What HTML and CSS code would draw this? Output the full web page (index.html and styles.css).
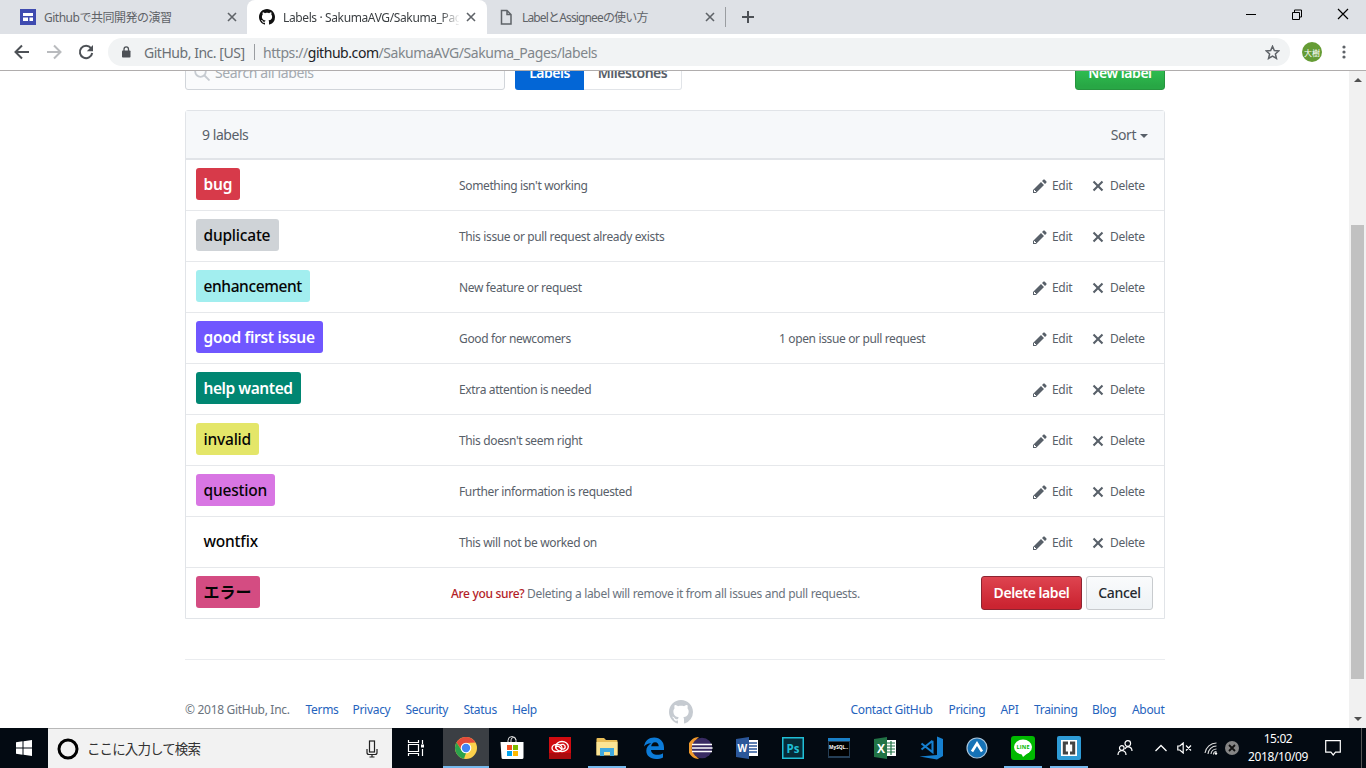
FILE: index.html
```html
<!DOCTYPE html>
<html lang="ja">
<head>
<meta charset="utf-8">
<title>Labels · SakumaAVG/Sakuma_Pages</title>
<link rel="stylesheet" href="styles.css">
</head>
<body>
<svg class="defs" aria-hidden="true">
  <symbol id="mark" viewBox="0 0 16 16"><path d="M8 0C3.58 0 0 3.58 0 8c0 3.54 2.29 6.53 5.47 7.59.4.07.55-.17.55-.38 0-.19-.01-.82-.01-1.49-2.01.37-2.53-.49-2.69-.94-.09-.23-.48-.94-.82-1.13-.28-.15-.68-.52-.01-.53.63-.01 1.08.58 1.23.82.72 1.21 1.87.87 2.33.66.07-.52.28-.87.51-1.07-1.78-.2-3.64-.89-3.64-3.95 0-.87.31-1.59.82-2.15-.08-.2-.36-1.02.08-2.12 0 0 .67-.21 2.2.82.64-.18 1.32-.27 2-.27.68 0 1.36.09 2 .27 1.53-1.04 2.2-.82 2.2-.82.44 1.1.16 1.92.08 2.12.51.56.82 1.27.82 2.15 0 3.07-1.87 3.75-3.65 3.95.29.25.54.73.54 1.48 0 1.07-.01 1.93-.01 2.2 0 .21.15.46.55.38A8.013 8.013 0 0 0 16 8c0-4.42-3.58-8-8-8z"/></symbol>
  <symbol id="pencil" viewBox="0 0 14 16"><path d="M0 12v3h3l8-8-3-3-8 8zm3 2H1v-2h1v1h1v1zm10.3-9.3L12 6 9 3l1.3-1.3a.996.996 0 0 1 1.41 0l1.59 1.59c.39.39.39 1.02 0 1.41z"/></symbol>
  <symbol id="x" viewBox="0 0 12 16"><path d="M7.48 8l3.75 3.75-1.48 1.48L6 9.48l-3.75 3.75-1.48-1.48L4.52 8 .77 4.25l1.48-1.48L6 6.52l3.75-3.75 1.48 1.48L7.48 8z"/></symbol>
  <symbol id="close" viewBox="0 0 10 10"><path d="M1 1l8 8M9 1l-8 8" fill="none" stroke="#5f6368" stroke-width="1.6"/></symbol>
</svg>

<header class="tabs">
  <div class="tab tab-first">
    <svg class="favicon" viewBox="0 0 16 16"><rect width="16" height="16" fill="#3f4bb0"/><path d="M3 4h10v3H3zM3 8.500h5V12H3zM9.500 8.500H13V12H9.500z" fill="#fff"/></svg>
    <span class="tab-title t1">Githubで共同開発の演習</span>
    <svg class="close"><use href="#close"/></svg>
  </div>
  <div class="tab tab-active">
    <svg class="favicon" fill="#111"><use href="#mark"/></svg>
    <span class="tab-title t2">Labels · SakumaAVG/Sakuma_Pages</span>
    <svg class="close"><use href="#close"/></svg>
  </div>
  <div class="tab tab-third">
    <svg class="favicon" viewBox="0 0 16 16" fill="none" stroke="#5f6368" stroke-width="1.500"><path d="M3.500 1.500h5.500l4 4v9.500h-9.500zM9 1.500v4h4"/></svg>
    <span class="tab-title t3">LabelとAssigneeの使い方</span>
    <svg class="close"><use href="#close"/></svg>
  </div>
  <svg class="plus" viewBox="0 0 12 12"><path d="M6 0v12M0 6h12" stroke="#4d5156" stroke-width="2"/></svg>
  <div class="winbtns">
    <svg viewBox="0 0 12 12"><path d="M1 6.500h10" stroke="#000"/></svg>
    <svg viewBox="0 0 12 12" fill="none" stroke="#000"><path d="M1.500 4.500h7v7h-7zM3.500 4.500v-2.500h7v7h-2"/></svg>
    <svg viewBox="0 0 12 12" fill="none" stroke="#000" stroke-width="1.200"><path d="M1 1l10 10M11 1L1 11"/></svg>
  </div>
</header>

<div class="toolbar">
  <svg class="nav-icon" viewBox="0 0 16 16" fill="none" stroke="#4d5156" stroke-width="2"><path d="M15 8H2M8 1.500L1.500 8 8 14.500"/></svg>
  <svg class="nav-icon" viewBox="0 0 16 16" fill="none" stroke="#b9bbbe" stroke-width="2"><path d="M1 8h13M8 1.500L14.500 8 8 14.500"/></svg>
  <svg class="nav-icon" viewBox="0 0 16 16"><path d="M13 4.200A6.200 6.200 0 1 0 14.200 9" fill="none" stroke="#4d5156" stroke-width="2"/><path d="M15 1v6.200H8.800z" fill="#4d5156"/></svg>
  <div class="omnibox">
    <svg class="lock" viewBox="0 0 10 12"><rect x="1" y="4.500" width="8.500" height="7" rx=".8" fill="#4d5156"/><path d="M3 5V3.200a2.250 2.250 0 0 1 4.500 0V5" fill="none" stroke="#4d5156" stroke-width="1.300"/></svg>
    <span class="org">GitHub, Inc. [US]</span>
    <span class="bar"></span>
    <span class="url">https://<b>github.com</b>/SakumaAVG/Sakuma_Pages/labels</span>
    <svg class="star" viewBox="0 0 14 14"><path d="M7 1.200l1.700 3.900 4.200.4-3.200 2.800 1 4.200L7 10.300l-3.700 2.200 1-4.200L1.100 5.500l4.200-.4z" fill="none" stroke="#5f6368" stroke-width="1.400"/></svg>
  </div>
  <span class="avatar">大樹</span>
  <svg class="dots" viewBox="0 0 4 14" fill="#5f6368"><circle cx="2" cy="2" r="1.600"/><circle cx="2" cy="7" r="1.600"/><circle cx="2" cy="12" r="1.600"/></svg>
</div>

<div class="viewport">
  <main class="page">
    <div class="subnav">
      <div class="search"><svg viewBox="0 0 16 16" fill="none" stroke="#c6cbd1" stroke-width="1.800"><circle cx="6.500" cy="6.500" r="5.300"/><path d="M10.500 10.500l5 5"/></svg><span>Search all labels</span></div>
      <div class="switch"><span class="on">Labels</span><span class="off">Milestones</span></div>
      <span class="new">New label</span>
    </div>
    <section class="list">
      <div class="list-head"><span class="count">9 labels</span><span class="sort">Sort<i></i></span></div>
      <div class="row"><span class="chip bug">bug</span><span class="desc">Something isn't working</span><span></span><a class="act"><svg class="pencil"><use href="#pencil"/></svg>Edit</a><a class="act"><svg class="x"><use href="#x"/></svg>Delete</a></div>
      <div class="row"><span class="chip duplicate">duplicate</span><span class="desc">This issue or pull request already exists</span><span></span><a class="act"><svg class="pencil"><use href="#pencil"/></svg>Edit</a><a class="act"><svg class="x"><use href="#x"/></svg>Delete</a></div>
      <div class="row"><span class="chip enhancement">enhancement</span><span class="desc">New feature or request</span><span></span><a class="act"><svg class="pencil"><use href="#pencil"/></svg>Edit</a><a class="act"><svg class="x"><use href="#x"/></svg>Delete</a></div>
      <div class="row"><span class="chip first">good first issue</span><span class="desc">Good for newcomers</span><span class="desc">1 open issue or pull request</span><a class="act"><svg class="pencil"><use href="#pencil"/></svg>Edit</a><a class="act"><svg class="x"><use href="#x"/></svg>Delete</a></div>
      <div class="row"><span class="chip help">help wanted</span><span class="desc">Extra attention is needed</span><span></span><a class="act"><svg class="pencil"><use href="#pencil"/></svg>Edit</a><a class="act"><svg class="x"><use href="#x"/></svg>Delete</a></div>
      <div class="row"><span class="chip invalid">invalid</span><span class="desc">This doesn't seem right</span><span></span><a class="act"><svg class="pencil"><use href="#pencil"/></svg>Edit</a><a class="act"><svg class="x"><use href="#x"/></svg>Delete</a></div>
      <div class="row"><span class="chip question">question</span><span class="desc">Further information is requested</span><span></span><a class="act"><svg class="pencil"><use href="#pencil"/></svg>Edit</a><a class="act"><svg class="x"><use href="#x"/></svg>Delete</a></div>
      <div class="row"><span class="chip wontfix">wontfix</span><span class="desc">This will not be worked on</span><span></span><a class="act"><svg class="pencil"><use href="#pencil"/></svg>Edit</a><a class="act"><svg class="x"><use href="#x"/></svg>Delete</a></div>
      <div class="row confirm"><span class="chip error">エラー</span><span class="sure"><b>Are you sure?</b> Deleting a label will remove it from all issues and pull requests.</span><span class="btn danger">Delete label</span><span class="btn cancel">Cancel</span></div>
    </section>
    <footer class="footer">
      <span class="copy">© 2018 GitHub, Inc.</span><a class="w-terms">Terms</a><a class="w-privacy">Privacy</a><a class="w-security">Security</a><a class="w-status">Status</a><a>Help</a>
      <svg class="footmark" fill="#c6cbd1"><use href="#mark"/></svg>
      <a class="w-contact">Contact GitHub</a><a class="w-pricing">Pricing</a><a class="w-api">API</a><a class="w-training">Training</a><a class="w-blog">Blog</a><a class="w-about">About</a>
    </footer>
  </main>
  <div class="scrollbar"><i class="up"></i><i class="thumb"></i><i class="down"></i></div>
</div>

<div class="taskbar">
  <div class="start"><svg width="16" height="16" viewBox="0 0 16 16" fill="#fff"><path d="M0 2.200l6.500-.9v6.200H0zM7.500 1.200L16 0v7.500H7.500zM0 8.500h6.500v6.200L0 13.800zM7.500 8.500H16V16l-8.500-1.200z"/></svg></div>
  <div class="cortana">
    <svg width="22" height="22" viewBox="0 0 22 22"><circle cx="11" cy="11" r="9" fill="none" stroke="#000" stroke-width="3"/></svg>
    <span>ここに入力して検索</span>
    <svg class="mic" width="12" height="18" viewBox="0 0 12 18" fill="none" stroke="#222" stroke-width="1.200"><rect x="3.500" y="1" width="5" height="11"/><path d="M1 9v3.500q0 2 2 2h6q2 0 2-2V9M6 14.500V17M3.500 17h5"/></svg>
  </div>
  <div class="app view"><svg width="18" height="16" viewBox="0 0 18 16" fill="none" stroke="#fff" stroke-width="1.200"><path d="M1.500 0v2.500h10V0M1.500 16v-2.500h10V16M1.500 4.500h10v7h-10zM15.500 0v4M15.500 9v7"/><path d="M14 4.500h3v3h-3z" fill="#fff" stroke="none"/></svg></div>
  <div class="app active"><svg width="24" height="24" viewBox="0 0 24 24"><circle cx="12" cy="12" r="11" fill="#fbd04b"/><path d="M2.500 6.500A11 11 0 0 1 21.500 6.500L12 7 7.500 14z" fill="#e34b3b"/><path d="M2.500 6.500L7.700 14.500 12 17l-2 5.800A11 11 0 0 1 2.500 6.500z" fill="#2ba24c"/><circle cx="12" cy="12" r="5.300" fill="#fff"/><circle cx="12" cy="12" r="4.200" fill="#4285f4"/></svg></div>
  <div class="app"><svg width="24" height="24" viewBox="0 0 24 24"><path d="M8 7V4.500a4 4 0 0 1 8 0V7M11 6V4a2.500 2.500 0 0 1 5 0" fill="none" stroke="#ddd"/><path d="M.5 6h23v15.500q0 1.500-1.500 1.500H3q-1.500 0-1.500-1.500z" fill="#fff"/><path d="M7 9h5v5H7z" fill="#f25022"/><path d="M13 9h5v5h-5z" fill="#7fba00"/><path d="M7 15h5v5H7z" fill="#00a4ef"/><path d="M13 15h5v5h-5z" fill="#ffb900"/></svg></div>
  <div class="app wide3"><svg width="22" height="22" viewBox="0 0 22 22"><rect width="22" height="22" fill="#d00b10"/><rect y="16" width="22" height="6" fill="#a90b0e"/><g fill="none" stroke="#fff" stroke-width="1.300"><ellipse cx="13" cy="9.500" rx="6.300" ry="5"/><ellipse cx="8" cy="11" rx="5" ry="3.700"/><path d="M7 11.500q-1-2 1-2.500 2 0 4 2.500 2.500 1.500 4-.5.800-2.500-1.500-3.500-2-.5-3.500 1"/></g></svg></div>
  <div class="app run"><svg width="24" height="24" viewBox="0 0 24 24"><path d="M1.500 3q0-1 1-1H9l2 2h10.500q1 0 1 1v14h-21z" fill="#e8bd58"/><path d="M1.500 6h21v13.500h-21z" fill="#fbe494"/><path d="M5 12h14v8h-4v-4H9v4H5z" fill="#3fa9df"/></svg></div>
  <div class="app wide2"><svg width="22" height="22" viewBox="0 0 22 22"><path d="M1 9.500C2 3.500 6 .5 11.200.5c6 0 9.800 4.500 9.800 10V13H8c.2 3.500 3.500 4.800 6 4.800 2.500 0 4.500-.7 6-1.600v4.300c-2 1-4.500 1.500-7 1.500C7 22 3.300 18.500 3.300 13.800c0-3.300 1.800-6 5-7.600C4.800 6.300 2.500 7.500 1 9.500zM8.200 9.200h7.500c0-2.200-1.200-4-3.600-4-2.300 0-3.600 1.800-3.900 4z" fill="#0c7bd8"/></svg></div>
  <div class="app"><svg width="24" height="24" viewBox="0 0 24 24"><path d="M10 1A11 11 0 0 0 10 23 14 14 0 0 1 10 1z" fill="#f09a2c"/><circle cx="13" cy="12" r="10.300" fill="#392b63"/><path d="M3 8.500h20M3 12h20.500M3 15.500h20" stroke="#fff" stroke-width="1.500"/></svg></div>
  <div class="app"><svg width="24" height="24" viewBox="0 0 24 24"><path d="M12 4h11v16H12z" fill="#fff"/><path d="M14 7h8M14 10h8M14 13h8M14 16h8" stroke="#2b579a" stroke-width="1.300"/><path d="M1 3l13-2v22L1 21z" fill="#2b579a"/><text class="ico" x="2.500" y="16" font-size="10" fill="#fff">W</text></svg></div>
  <div class="app"><svg width="22" height="22" viewBox="0 0 22 22"><rect x=".75" y=".75" width="20.500" height="20.500" fill="#062b38" stroke="#20bfd6" stroke-width="1.500"/><text class="ico" x="4.500" y="15.500" font-size="11.500" fill="#20bfd6">Ps</text></svg></div>
  <div class="app"><svg width="22" height="20" viewBox="0 0 22 20"><rect width="22" height="20" fill="#253e55"/><path d="M0 0h22v3H0z" fill="#1980c8"/><path d="M1 4h20v14H1z" fill="#000"/><text class="ico" x="1" y="10.500" font-size="6" fill="#fff" textLength="19" lengthAdjust="spacingAndGlyphs">MySQL..</text></svg></div>
  <div class="app"><svg width="24" height="24" viewBox="0 0 24 24"><path d="M12 4h11v16H12z" fill="#fff"/><path d="M14 7h8M14 10h8M14 13h8M14 16h8M18 5v14" stroke="#217346" stroke-width="1.200"/><path d="M1 3l13-2v22L1 21z" fill="#217346"/><text class="ico" x="4" y="16.500" font-size="12" fill="#fff">X</text></svg></div>
  <div class="app"><svg width="24" height="24" viewBox="0 0 24 24"><path d="M18 .5l6 2.500v17l-6 3.500L.5 20.500l17.500-1.500z" fill="#1680d0"/><path d="M13.500 4.800v11.400L2.500 7.500M2.500 13.500L13.500 4.800" fill="none" stroke="#1680d0" stroke-width="2.100"/></svg></div>
  <div class="app"><svg width="22" height="22" viewBox="0 0 22 22"><circle cx="11" cy="11" r="10" fill="#1672b6" stroke="#a7c4dc" stroke-width="1.200"/><path d="M6 14.500l5-8 5 8" fill="none" stroke="#fff" stroke-width="2.600"/></svg></div>
  <div class="app run"><svg width="24" height="24" viewBox="0 0 24 24"><rect width="24" height="24" rx="3" fill="#00b900"/><ellipse cx="12" cy="11" rx="9" ry="7.500" fill="#fff"/><path d="M10 17l2 4 6-5z" fill="#fff"/><text class="ico" x="5.500" y="13" font-size="5.500" fill="#00b900" textLength="13">LINE</text></svg></div>
  <div class="app run"><svg width="24" height="24" viewBox="0 0 24 24"><rect width="24" height="24" rx="2" fill="#2e9bd6"/><path d="M4 4h16v16H4z" fill="#fff"/><path d="M11 7H7.300v10H11M13 7h3.700v10H13" fill="none" stroke="#444" stroke-width="3"/></svg></div>
  <div class="tray">
    <svg class="people" width="16" height="16" viewBox="0 0 16 16" fill="none" stroke="#fff" stroke-width="1.200"><circle cx="10.800" cy="3.500" r="2.800"/><circle cx="4.800" cy="8" r="2.300"/><path d="M1 15q0-4 4-4.500 4 .5 4 4.500M8 9q1-2 3-2.300 4 .5 4 4.300"/></svg>
    <svg class="up-arrow" width="12" height="8" viewBox="0 0 12 8" fill="none" stroke="#fff" stroke-width="1.300"><path d="M.5 7L6 1.500 11.500 7"/></svg>
    <svg class="sound" width="15" height="12" viewBox="0 0 15 12" fill="none" stroke="#fff" stroke-width="1.200"><path d="M.8 4h2l3.400-3v10L2.800 8h-2zM9 3.500l5 5M14 3.500l-5 5"/></svg>
    <svg class="wifi" width="14" height="14" viewBox="0 0 14 14" fill="none" stroke="#ddd" stroke-width="1.100"><path d="M1 12A11.500 11.500 0 0 1 12.500 2M4 13a8.500 8.500 0 0 1 8.500-8M7 13a5.500 5.500 0 0 1 5.500-5M9.500 13.500a3 3 0 0 1 3-3"/><circle cx="12" cy="12.500" r="1.200" fill="#fff" stroke="none"/></svg>
    <svg class="off-badge" width="14" height="14" viewBox="0 0 14 14"><circle cx="7" cy="7" r="7" fill="#858585"/><path d="M4 4l6 6M10 4l-6 6" stroke="#111" stroke-width="1.800"/></svg>
    <div class="clock"><span>15:02</span><span>2018/10/09</span></div>
    <svg class="notice" width="16" height="16" viewBox="0 0 16 16" fill="none" stroke="#fff" stroke-width="1.200"><path d="M.7.700h14.600v11.500H10.500l-2.300 2.800-2.300-2.800H.7z"/></svg>
    <i class="edge-line"></i>
  </div>
</div>
</body>
</html>
```
FILE: styles.css
```css
* { box-sizing: border-box; }
body { margin: 0; width: 1366px; height: 768px; overflow: hidden; display: flex; flex-direction: column; background: #fff; font-family: "Noto Sans", "Noto Sans CJK JP", sans-serif; font-size: 12px; color: #586069; white-space: nowrap; }
svg { flex: none; display: block; }
.defs { width: 0; height: 0; position: absolute; }

/* tab strip */
.tabs { height: 34px; flex: none; background: #dee1e6; display: flex; align-items: center; }
.tab { height: 34px; display: flex; align-items: center; color: #5f6368; }
.tab-first { width: 247px; padding-left: 20px; }
.tab-active { width: 240px; padding-left: 12px; background: #fff; border-radius: 8px 8px 0 0; color: #3c4043; }
.tab-third { width: 239px; padding-left: 11px; height: 20px; border-right: 1px solid #9a9da1; }
.favicon { width: 16px; height: 16px; }
.tab-title { margin-left: 8px; overflow: hidden; width: 176px; margin-right: 7px; letter-spacing: -.5px; }
.t2 { mask-image: linear-gradient(90deg, #000 158px, transparent 177px); letter-spacing: -.38px; }
.t3 { letter-spacing: -.85px; }
.close { width: 10px; height: 10px; }
.plus { width: 12px; height: 12px; margin-left: 16px; }
.winbtns { margin-left: auto; display: flex; gap: 34px; padding-right: 17px; padding-bottom: 6px; }
.winbtns svg { width: 12px; height: 12px; }

/* toolbar */
.toolbar { height: 37px; flex: none; display: flex; align-items: center; border-bottom: 1px solid #b0adad; padding-left: 14px; }
.nav-icon { width: 16px; height: 16px; margin-right: 16px; }
.omnibox { width: 1182px; height: 28px; border-radius: 14px; background: #f1f3f4; display: flex; align-items: center; padding: 0 10px 0 13px; margin-left: -2px; font-size: 14px; color: #6b7075; }
.lock { width: 10px; height: 12px; margin-right: 13px; }
.org { width: 102px; letter-spacing: -.47px; }
.bar { width: 1px; height: 16px; background: #9a9da1; margin: 0 8px; }
.url { letter-spacing: -.44px; color: #80868b; }
.url b { font-weight: 400; color: #202124; }
.star { width: 15px; height: 15px; margin-left: auto; }
.avatar { width: 20px; height: 20px; border-radius: 50%; background: #659c35; color: #fff; font-size: 8px; display: grid; place-items: center; margin-left: 12px; }
.dots { width: 4px; height: 14px; margin-left: 20px; }

/* page */
.viewport { height: 657px; flex: none; display: flex; overflow: hidden; }
.page { width: 1349px; padding: 0 184px 0 185px; flex: none; }
.subnav { display: flex; height: 34px; margin-top: -15px; font-size: 14px; line-height: 20px; }
.search { width: 320px; border: 1px solid #d1d5da; border-radius: 3px; background: #fafbfc; padding: 6px 8px; display: flex; gap: 5px; color: #a3aab1; letter-spacing: -.38px; }
.search svg { width: 16px; height: 16px; margin-top: 2px; }
.switch { display: flex; margin-left: 10px; width: 167px; font-weight: 600; letter-spacing: -.5px; text-align: center; }
.switch span { padding: 7px 0; }
.on { width: 69px; background: #0366d6; color: #fff; border-radius: 3px 0 0 3px; }
.off { width: 98px; border: 1px solid #e1e4e8; border-left: 0; border-radius: 0 3px 3px 0; }
.switch .off { padding: 6px 0; }
.new { margin-left: auto; width: 90px; padding: 6px 0; text-align: center; border: 1px solid #27943f; border-radius: 3px; background: linear-gradient(#34d058, #28a745 90%); color: #fff; font-weight: 600; letter-spacing: -.45px; }
.list { margin-top: 20px; border: 1px solid #e1e4e8; border-radius: 3px 3px 0 0; }
.list-head { height: 49px; background: #f6f8fa; border-bottom: 2px solid #e1e4e8; display: flex; justify-content: space-between; align-items: center; padding: 0 16px; font-size: 14px; letter-spacing: -.45px; }
.sort { display: flex; align-items: center; gap: 4px; }
.sort i { border: 4px solid transparent; border-top-color: #586069; border-bottom: 0; margin-top: 2px; }
.row { height: 51px; display: grid; grid-template-columns: 263px 320px 254px 59px auto; align-items: center; padding: 0 0 0 10px; border-bottom: 1px solid #e6e8eb; }
.row:last-child { border-bottom: 0; height: 50px; }
.chip { justify-self: start; align-self: start; margin-top: 8px; height: 32px; line-height: 33px; padding-left: 7.500px; border-radius: 3px; font-size: 15.500px; font-weight: 500; letter-spacing: -.2px; color: #050505; }
.bug { width: 44px; background: #d73a4a; color: #fff; font-weight: 600; }
.duplicate { width: 83px; background: #cfd3d7; }
.enhancement { width: 114px; background: #a2eeef; letter-spacing: -.4px; }
.first { width: 127px; background: #7057ff; color: #fff; font-weight: 600; letter-spacing: -.3px; }
.help { width: 105px; background: #008672; color: #fff; font-weight: 600; letter-spacing: -.45px; }
.invalid { width: 63px; background: #e4e669; }
.question { width: 79px; background: #d876e3; }
.wontfix { background: #fff; }
.error { width: 64px; background: #d44c82; letter-spacing: 0; line-height: 32px; font-size: 16px; font-weight: 600; }
.desc { letter-spacing: -.36px; padding-top: 1px; }
.act { display: flex; align-items: center; letter-spacing: -.3px; padding-top: 1px; }
.pencil { width: 14px; height: 16px; fill: #586069; margin-right: 5px; }
.x { width: 12px; height: 16px; fill: #586069; margin-right: 6px; }
.confirm { display: flex; padding-right: 11px; }
.confirm .chip { margin-right: 191px; }
.sure { letter-spacing: -.32px; color: #6a737d; padding-top: 1px; }
.sure b { font-weight: 500; color: #b31d28; }
.btn { height: 34px; line-height: 32px; border-radius: 3px; font-size: 14px; font-weight: 600; letter-spacing: -.45px; text-align: center; }
.danger { width: 101px; margin-left: auto; margin-right: 4px; color: #fff; border: 1px solid #8c2431; background: linear-gradient(#de4450, #cb2431 90%); }
.cancel { width: 67px; color: #24292e; border: 1px solid #c8cbce; background: linear-gradient(#fafbfc, #eff3f6 90%); font-weight: 500; letter-spacing: -.3px; }
.footer { display: flex; margin-top: 40px; border-top: 1px solid #eaecef; padding-top: 40px; letter-spacing: -.3px; line-height: 20px; }
.footer a { color: #2563bd; }
.copy { width: 120.500px; color: #6a737d; }
.w-terms { width: 47px; }
.w-privacy { width: 53px; }
.w-security { width: 58px; }
.w-status { width: 48.500px; }
.footmark { width: 24px; height: 24px; margin-left: 132.500px; margin-right: 157px; }
.w-contact { width: 98px; }
.w-pricing { width: 52px; }
.w-api { width: 33.500px; }
.w-training { width: 58px; }
.w-blog { width: 40px; }
.scrollbar { width: 17px; background: #f1f1f1; display: flex; flex-direction: column; align-items: center; flex: none; }
.scrollbar i { flex: none; }
.up { border: 4px solid transparent; border-bottom-color: #505050; border-top: 0; margin-top: 7px; }
.thumb { width: 13px; height: 454px; background: #c1c1c1; margin-top: 143px; }
.down { border: 4px solid transparent; border-top-color: #505050; border-bottom: 0; margin-top: 38px; }

/* taskbar */
.taskbar { height: 40px; flex: none; background: #030a12; display: flex; }
.start { width: 48px; display: grid; place-items: center; }
.cortana { width: 344px; background: #f2f2f2; border-top: 1px solid #b8b8b8; display: flex; align-items: center; padding: 0 14px 0 9px; font-size: 13.500px; color: #333; letter-spacing: -.9px; }
.cortana span { margin-left: 8px; padding-bottom: 2px; }
.mic { margin-left: auto; }
.app { width: 46px; display: grid; place-items: center; flex: none; }
.view { width: 51px; padding-right: 3px; }
.active { background: #3b3f44; box-shadow: inset 0 -2px #76b9ed; }
.wide3 { width: 49px; }
.wide2 { width: 48px; }
.run { background: linear-gradient(#76b9ed, #76b9ed) 50% 100% / 38px 2px no-repeat; }
.ico { font-family: "Open Sans", sans-serif; font-weight: 700; }
.tray { flex: 1; display: flex; align-items: center; color: #fff; }
.people { margin-left: 25px; }
.up-arrow { margin-left: 22px; }
.sound { margin-left: 10px; }
.wifi { margin-left: 12px; }
.off-badge { margin-left: 7px; }
.clock { width: 60px; margin-left: 9px; display: flex; flex-direction: column; align-items: center; line-height: 18px; letter-spacing: -.4px; }
.notice { margin-left: 17px; }
.edge-line { width: 1px; height: 40px; background: #555; margin-left: 20px; }
```
